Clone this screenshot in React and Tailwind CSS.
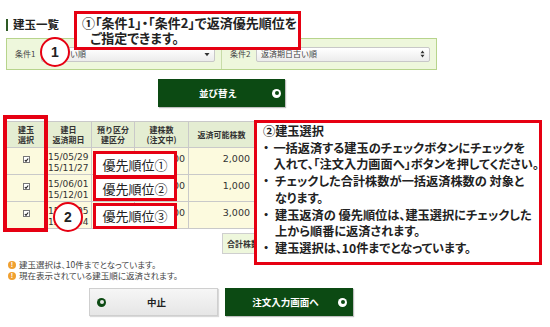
import React from 'react';

const rows = [
  { d1: '15/05/29', d2: '15/11/27', qty: '2,000', avail: '2,000' },
  { d1: '15/06/01', d2: '15/12/01', qty: '1,000', avail: '1,000' },
  { d1: '15/06/05', d2: '15/12/04', qty: '3,000', avail: '3,000' },
];

function CheckBox() {
  return (
    <div className="mx-auto w-[7px] h-[7px] border border-[#777] bg-white flex items-center justify-center">
      <svg width="6" height="6" viewBox="0 0 6 6">
        <path d="M1 3 L2.4 4.6 L5 1.2" fill="none" stroke="#222" strokeWidth="1.3" />
      </svg>
    </div>
  );
}

function SelectBox({ text, arrow }) {
  return (
    <div className="flex items-center h-[15px] flex-1 border border-[#c8c8c8] rounded-[2px] bg-gradient-to-b from-white to-[#ececec] px-[4px]">
      <span className="text-[8px] text-[#444] flex-1 whitespace-nowrap">{text}</span>
      {arrow === 'down' ? (
        <svg width="6" height="5" viewBox="0 0 6 5">
          <path d="M0.5 1 L5.5 1 L3 4.2 Z" fill="#333" />
        </svg>
      ) : (
        <svg width="5" height="8" viewBox="0 0 5 8">
          <path d="M0.5 3.3 L4.5 3.3 L2.5 0.5 Z M0.5 4.7 L4.5 4.7 L2.5 7.5 Z" fill="#333" />
        </svg>
      )}
    </div>
  );
}

function DotIcon({ light }) {
  return light ? (
    <span className="w-[9px] h-[9px] rounded-full bg-white flex items-center justify-center">
      <span className="w-[4px] h-[4px] rounded-full bg-[#0c4a13]" />
    </span>
  ) : (
    <span className="w-[9px] h-[9px] rounded-full bg-[#0c4a13] flex items-center justify-center">
      <span className="w-[4px] h-[4px] rounded-full bg-[#e8e8e8]" />
    </span>
  );
}

function Note({ children }) {
  return (
    <div className="flex items-center h-[11px]">
      <span className="w-[8px] h-[8px] rounded-full bg-[#f0a030] text-white text-[7px] font-bold leading-none flex items-center justify-center mr-[3px] font-['Liberation_Sans',sans-serif]">!</span>
      <span>{children}</span>
    </div>
  );
}

export default function App() {
  return (
    <div className="relative w-[550px] h-[327px] overflow-hidden bg-white font-['Noto_Sans_CJK_JP',sans-serif] text-[#222]">
      <div className="pt-[19px] pl-[6px]">
        {/* heading */}
        <div className="flex items-center h-[12px] border-l-[2px] border-[#2e5a25] pl-[5px]">
          <span className="text-[11.5px] font-bold leading-none">建玉一覧</span>
        </div>

        {/* filter panel */}
        <div className="mt-[7px] w-[431px] h-[32px] flex border border-[#b7d48c] bg-[#eef7dc]">
          <div className="w-[215px] flex items-center pl-[8px] pr-[6px] gap-[6px] border-r border-[#c8dca8]">
            <span className="text-[8px] text-[#444] w-[20px] whitespace-nowrap">条件1</span>
            <SelectBox text="建日古い順" arrow="down" />
          </div>
          <div className="flex-1 flex items-center pl-[8px] pr-[6px] gap-[6px]">
            <span className="text-[8px] text-[#444] w-[20px] whitespace-nowrap">条件2</span>
            <SelectBox text="返済期日古い順" arrow="updown" />
          </div>
        </div>

        {/* sort button */}
        <div className="mt-[9px] ml-[152px] w-[127px] h-[28px] bg-[#0c4a13] flex items-center text-white shadow-[1px_1px_1px_rgba(0,0,0,0.25)]">
          <span className="flex-1 text-center text-[9.5px] font-bold pl-[6px]">並び替え</span>
          <span className="mr-[4px]"><DotIcon light /></span>
        </div>

        {/* table */}
        <table className="mt-[14px] border-collapse table-fixed w-[431px] text-[8px]">
          <colgroup>
            <col className="w-[39px]" />
            <col className="w-[46px]" />
            <col className="w-[43px]" />
            <col className="w-[54px]" />
            <col className="w-[66px]" />
            <col />
          </colgroup>
          <thead>
            <tr className="h-[26px] bg-[#e4edd2] font-bold text-[#333] leading-[10px]">
              <th className="border border-[#c9c9c9] font-bold">建玉<br />選択</th>
              <th className="border border-[#c9c9c9] font-bold">建日<br />返済期日</th>
              <th className="border border-[#c9c9c9] font-bold">預り区分<br />建区分</th>
              <th className="border border-[#c9c9c9] font-bold">建株数<br />(注文中)</th>
              <th className="border border-[#c9c9c9] font-bold">返済可能株数</th>
              <th className="border border-[#c9c9c9] font-bold">返済株数</th>
            </tr>
          </thead>
          <tbody className="font-['DejaVu_Sans',sans-serif] text-[9.5px] text-[#333]">
            {rows.map((r, i) => (
              <tr key={i} className={`${i === 2 ? 'h-[26px]' : 'h-[27px]'} bg-[#fcfade]`}>
                <td className="border border-[#c9c9c9] align-top pt-[8px]"><CheckBox /></td>
                <td className="border border-[#c9c9c9] align-top pt-[4px] pl-[2px] text-[9px] leading-[11px] whitespace-nowrap">
                  {r.d1}<br />{r.d2}
                </td>
                <td className="border border-[#c9c9c9]" />
                <td className="border border-[#c9c9c9] align-top pt-[4px] pr-[3px] text-right">{r.qty}</td>
                <td className="border border-[#c9c9c9] align-top pt-[4px] pr-[4px] text-right">{r.avail}</td>
                <td className="border border-[#c9c9c9]" />
              </tr>
            ))}
          </tbody>
        </table>

        {/* total */}
        <div className="mt-[4px] ml-[216px] w-[120px] h-[21px] flex items-center border border-[#cfcfcf] bg-[#eef7dc] pl-[4px] text-[8px] font-bold text-[#333]">
          合計株数
        </div>

        {/* notes */}
        <div className="mt-[5px] ml-[2px] text-[8.5px] text-[#444] [font-feature-settings:'palt']">
          <Note>建玉選択は、10件までとなっています。</Note>
          <Note>現在表示されている建玉順に返済されます。</Note>
        </div>

        {/* action buttons */}
        <div className="mt-[7px] ml-[83px] flex gap-[7px]">
          <div className="w-[129px] h-[28px] flex items-center border border-[#cfcfcf] bg-gradient-to-b from-[#f6f6f6] to-[#e6e6e6] shadow-[1px_1px_1px_rgba(0,0,0,0.15)]">
            <span className="ml-[7px]"><DotIcon /></span>
            <span className="flex-1 text-center text-[9.5px] font-bold pr-[10px]">中止</span>
          </div>
          <div className="w-[128px] h-[28px] flex items-center bg-[#0c4a13] text-white shadow-[1px_1px_1px_rgba(0,0,0,0.25)]">
            <span className="flex-1 text-center text-[9.5px] font-bold pl-[8px]">注文入力画面へ</span>
            <span className="mr-[6px]"><DotIcon light /></span>
          </div>
        </div>
      </div>

      {/* overlays: annotation callouts */}
      <div className="absolute left-[74px] top-[11px] w-[227px] h-[39px] border-[3px] border-[#e60012] bg-white pl-[5px] pt-[1px] text-[13px] font-bold leading-[15px] whitespace-nowrap [font-feature-settings:'palt']">
        ①「条件1」・「条件2」で返済優先順位を<br />
        <span className="pl-[8px]">ご指定できます。</span>
      </div>

      <div className="absolute left-[40px] top-[37px] w-[30px] h-[30px] rounded-full border-[2px] border-[#e60012] bg-white flex items-center justify-center text-[14px] font-bold font-['Liberation_Sans',sans-serif]">
        1
      </div>

      <div className="absolute left-[3px] top-[115px] w-[45px] h-[117px] border-[4px] border-[#e60012]" />

      <div className="absolute left-[93px] top-[151px] w-[84px] h-[27px] border-[3px] border-[#e60012] bg-white flex items-center justify-center text-[13px]">
        優先順位①
      </div>
      <div className="absolute left-[93px] top-[176px] w-[84px] h-[25px] border-[3px] border-[#e60012] bg-white flex items-center justify-center text-[13px]">
        優先順位②
      </div>
      <div className="absolute left-[93px] top-[203px] w-[84px] h-[26px] border-[3px] border-[#e60012] bg-white flex items-center justify-center text-[13px]">
        優先順位③
      </div>

      <div className="absolute left-[53px] top-[202px] w-[30px] h-[30px] rounded-full border-[2px] border-[#e60012] bg-white flex items-center justify-center text-[14px] font-bold font-['Liberation_Sans',sans-serif]">
        2
      </div>

      <div className="absolute left-[254px] top-[120px] w-[288px] h-[145px] border-[3px] border-[#e60012] bg-white pl-[6px] text-[12.2px] font-bold leading-[16.7px] whitespace-nowrap [font-feature-settings:'palt']">
        <div>②建玉選択</div>
        <div className="flex">
          <span className="w-[12px]">・</span>
          <span>一括返済する建玉のチェックボタンにチェックを<br />入れて、「注文入力画面へ」ボタンを押してください。</span>
        </div>
        <div className="flex">
          <span className="w-[12px]">・</span>
          <span>チェックした合計株数が一括返済株数の 対象と<br />なります。</span>
        </div>
        <div className="flex">
          <span className="w-[12px]">・</span>
          <span>建玉返済の 優先順位は、建玉選択にチェックした<br />上から順番に返済されます。</span>
        </div>
        <div className="flex">
          <span className="w-[12px]">・</span>
          <span>建玉選択は、10件までとなっています。</span>
        </div>
      </div>
    </div>
  );
}
